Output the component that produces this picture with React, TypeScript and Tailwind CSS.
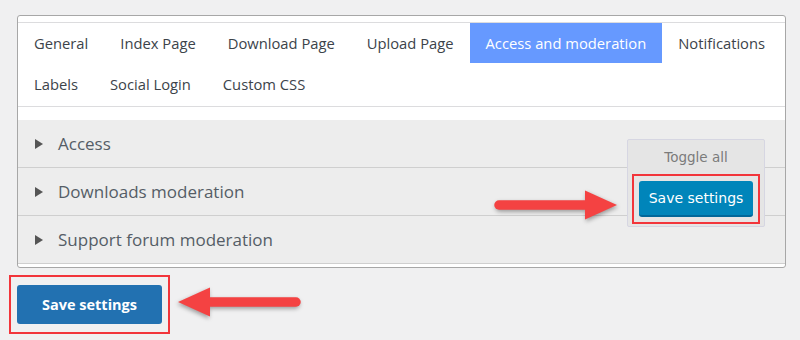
const tabsRow1 = ['General', 'Index Page', 'Download Page', 'Upload Page', 'Access and moderation', 'Notifications']
const tabsRow2 = ['Labels', 'Social Login', 'Custom CSS']
const sections = ['Access', 'Downloads moderation', 'Support forum moderation']

function Arrow({ flip = false, className = '' }: { flip?: boolean; className?: string }) {
  return (
    <svg
      width="132"
      height="40"
      viewBox="0 0 132 40"
      className={className}
      style={{ filter: 'drop-shadow(1px 2px 2px rgba(0,0,0,0.35))', transform: flip ? 'scaleX(-1)' : undefined }}
    >
      <line x1="6" y1="20" x2="100" y2="20" stroke="#f44242" strokeWidth="9.5" strokeLinecap="round" />
      <polygon points="92,5.5 124,20 92,34.5" fill="#f44242" />
    </svg>
  )
}

export default function App() {
  return (
    <div
      className="relative h-[340px] w-[800px] overflow-hidden bg-[#f0f0f1] pt-[15px] pl-[17px]"
      style={{ fontFamily: '"Open Sans", "Noto Sans", sans-serif' }}
    >
      <div className="w-[769px] rounded-[3px] border border-[#a7a7a7] bg-white pt-[6px] pb-[3px]">
        <div className="border-t border-[#dcdcde]">
          <div className="flex overflow-hidden whitespace-nowrap text-[14.75px] text-[#3c434a]">
            {tabsRow1.map((t) => (
              <div
                key={t}
                className={`flex h-[40px] shrink-0 items-center px-4 ${
                  t === 'Access and moderation' ? 'bg-[#6699ff] text-white' : ''
                }`}
              >
                {t}
              </div>
            ))}
          </div>
          <div className="flex whitespace-nowrap text-[14.75px] text-[#3c434a]">
            {tabsRow2.map((t) => (
              <div key={t} className="flex h-[42px] shrink-0 items-center px-4">
                {t}
              </div>
            ))}
          </div>
        </div>
        <div className="mt-[1px] border-t border-[#dcdcde] pt-[13px]">
          <div className="relative bg-[#ededed]">
            {sections.map((s) => (
              <div
                key={s}
                className="flex h-[48px] items-center gap-[14px] border-b border-[#cfcfcf] pl-[16px] text-[17px] text-[#555d66]"
              >
                <svg width="10" height="12" viewBox="0 0 10 12">
                  <polygon points="1,1 9,6 1,11" fill="#555" />
                </svg>
                {s}
              </div>
            ))}
            <div className="absolute top-[19px] left-[609px] w-[138px] rounded-[2px] border border-[#d6d6e2] bg-[#e5e5e5] pb-[2px]">
              <div
                className="flex h-[34px] items-center justify-center text-[13.5px] text-[#7b7b7b]"
                style={{ fontFamily: '"DejaVu Sans", sans-serif' }}
              >
                Toggle all
              </div>
              <div className="mx-[4px] border-[2px] border-[#f2353b] p-[5px]">
                <button
                  className="flex h-[36px] w-full items-center justify-center rounded-[3px] border-b-2 border-[#006799] bg-[#0085ba] text-[14px] text-white"
                  style={{ fontFamily: '"DejaVu Sans", sans-serif' }}
                >
                  Save settings
                </button>
              </div>
            </div>
          </div>
        </div>
      </div>

      <div className="mt-[7px] ml-[-8px] inline-block border-[2px] border-[#f2353b] px-[6px] py-[8px]">
        <button className="flex h-[39px] w-[145px] items-center justify-center rounded-[3px] bg-[#2271b1] text-[14.5px] font-bold text-white">
          Save settings
        </button>
      </div>

      <Arrow className="absolute top-[185px] left-[493px]" />
      <Arrow flip className="absolute top-[282px] left-[170px]" />
    </div>
  )
}
